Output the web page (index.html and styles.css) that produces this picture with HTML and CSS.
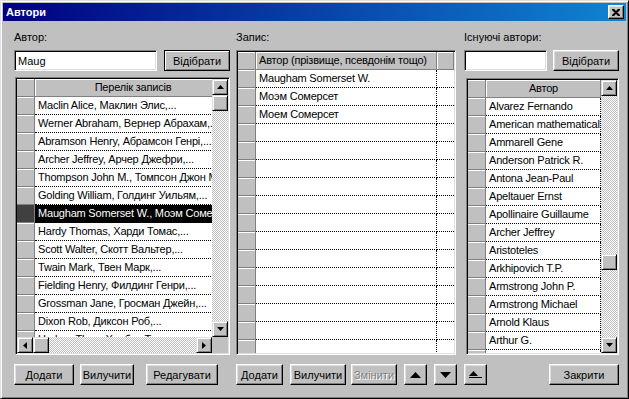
FILE: index.html
```html
<!DOCTYPE html>
<html lang="uk">
  <head>
    <meta charset="UTF-8" />
    <meta name="viewport" content="width=device-width, initial-scale=1.0" />
    <title>Автори</title>
    <link rel="stylesheet" href="styles.css">
  </head>
  <body>
    <div class="window">
      <div class="titlebar">
        <span class="title">Автори</span>
        <button class="close-btn" title="Закрити">
          <svg width="8" height="7" viewBox="0 0 8 7"><path d="M0 0h2l2 2 2-2h2v1L6 3l-1 .5L6 4l2 2v1H6L4 5 2 7H0V6l2-2 1-.5L2 3 0 1z" fill="#000"/></svg>
        </button>
      </div>

      <div class="content">
        <div class="panes">
          <!-- ліва панель: перелік записів -->
          <section class="pane pane-left">
            <div class="label">Автор:</div>
            <div class="filter">
              <input class="field field-left" type="text" value="Maug" />
              <button class="btn btn-default btn-filter">Відібрати</button>
            </div>
            <div class="grid grid-left">
              <div class="grid-view">
                <div class="row head"><div class="ind"></div><div class="cell col-list">Перелік записів</div></div>
                <div class="row"><div class="ind"></div><div class="cell col-list">Maclin Alice, Маклин Элис,...</div></div>
                <div class="row"><div class="ind"></div><div class="cell col-list">Werner Abraham, Вернер Абрахам,...</div></div>
                <div class="row"><div class="ind"></div><div class="cell col-list">Abramson Henry, Абрамсон Генрі,...</div></div>
                <div class="row"><div class="ind"></div><div class="cell col-list">Archer Jeffrey, Арчер Джефри,...</div></div>
                <div class="row"><div class="ind"></div><div class="cell col-list">Thompson John M., Томпсон Джон М.,...</div></div>
                <div class="row"><div class="ind"></div><div class="cell col-list">Golding William, Голдинг Уильям,...</div></div>
                <div class="row sel"><div class="ind"></div><div class="cell col-list">Maugham Somerset W., Моэм Сомерсет,...</div></div>
                <div class="row"><div class="ind"></div><div class="cell col-list">Hardy Thomas, Харди Томас,...</div></div>
                <div class="row"><div class="ind"></div><div class="cell col-list">Scott Walter, Скотт Вальтер,...</div></div>
                <div class="row"><div class="ind"></div><div class="cell col-list">Twain Mark, Твен Марк,...</div></div>
                <div class="row"><div class="ind"></div><div class="cell col-list">Fielding Henry, Филдинг Генри,...</div></div>
                <div class="row"><div class="ind"></div><div class="cell col-list">Grossman Jane, Гросман Джейн,...</div></div>
                <div class="row"><div class="ind"></div><div class="cell col-list">Dixon Rob, Диксон Роб,...</div></div>
                <div class="row"><div class="ind"></div><div class="cell col-list">Harbou Thea, Харбоу Tea,...</div></div>
              </div>
              <div class="vscroll">
                <div class="sb-btn"><svg width="7" height="4" viewBox="0 0 7 4"><path d="M3.5 0L7 4H0z"/></svg></div>
                <div class="track"><div class="thumb"></div></div>
                <div class="sb-btn"><svg width="7" height="4" viewBox="0 0 7 4"><path d="M0 0h7L3.5 4z"/></svg></div>
              </div>
              <div class="hscroll">
                <div class="sb-btn"><svg width="4" height="7" viewBox="0 0 4 7"><path d="M4 0v7L0 3.5z"/></svg></div>
                <div class="track"><div class="thumb"></div></div>
                <div class="sb-btn"><svg width="4" height="7" viewBox="0 0 4 7"><path d="M0 0l4 3.5L0 7z"/></svg></div>
              </div>
              <div class="corner"></div>
            </div>
          </section>

          <!-- середня панель: запис -->
          <section class="pane pane-mid">
            <div class="label">Запис:</div>
            <div class="grid grid-mid">
              <div class="grid-view">
                <div class="row head"><div class="ind"></div><div class="cell col-name">Автор (прізвище, псевдонім тощо)</div><div class="cell col-extra"></div></div>
                <div class="row"><div class="ind"></div><div class="cell col-name">Maugham Somerset W.</div><div class="cell col-extra"></div></div>
                <div class="row"><div class="ind"></div><div class="cell col-name">Моэм Сомерсет</div><div class="cell col-extra"></div></div>
                <div class="row"><div class="ind"></div><div class="cell col-name">Моем Сомерсет</div><div class="cell col-extra"></div></div>
                <div class="row"><div class="ind"></div><div class="cell col-name"></div><div class="cell col-extra"></div></div>
                <div class="row"><div class="ind"></div><div class="cell col-name"></div><div class="cell col-extra"></div></div>
                <div class="row"><div class="ind"></div><div class="cell col-name"></div><div class="cell col-extra"></div></div>
                <div class="row"><div class="ind"></div><div class="cell col-name"></div><div class="cell col-extra"></div></div>
                <div class="row"><div class="ind"></div><div class="cell col-name"></div><div class="cell col-extra"></div></div>
                <div class="row"><div class="ind"></div><div class="cell col-name"></div><div class="cell col-extra"></div></div>
                <div class="row"><div class="ind"></div><div class="cell col-name"></div><div class="cell col-extra"></div></div>
                <div class="row"><div class="ind"></div><div class="cell col-name"></div><div class="cell col-extra"></div></div>
                <div class="row"><div class="ind"></div><div class="cell col-name"></div><div class="cell col-extra"></div></div>
                <div class="row"><div class="ind"></div><div class="cell col-name"></div><div class="cell col-extra"></div></div>
                <div class="row"><div class="ind"></div><div class="cell col-name"></div><div class="cell col-extra"></div></div>
                <div class="row"><div class="ind"></div><div class="cell col-name"></div><div class="cell col-extra"></div></div>
                <div class="row"><div class="ind"></div><div class="cell col-name"></div><div class="cell col-extra"></div></div>
              </div>
            </div>
          </section>

          <!-- права панель: існуючі автори -->
          <section class="pane pane-right">
            <div class="label">Існуючі автори:</div>
            <div class="filter">
              <input class="field field-right" type="text" value="" />
              <button class="btn btn-filter">Відібрати</button>
            </div>
            <div class="grid grid-right">
              <div class="grid-view">
                <div class="row head"><div class="ind"></div><div class="cell col-author">Автор</div></div>
                <div class="row"><div class="ind"></div><div class="cell col-author">Alvarez Fernando</div></div>
                <div class="row"><div class="ind"></div><div class="cell col-author">American mathematical</div></div>
                <div class="row"><div class="ind"></div><div class="cell col-author">Ammarell Gene</div></div>
                <div class="row"><div class="ind"></div><div class="cell col-author">Anderson Patrick R.</div></div>
                <div class="row"><div class="ind"></div><div class="cell col-author">Antona Jean-Paul</div></div>
                <div class="row"><div class="ind"></div><div class="cell col-author">Apeltauer Ernst</div></div>
                <div class="row"><div class="ind"></div><div class="cell col-author">Apollinaire Guillaume</div></div>
                <div class="row"><div class="ind"></div><div class="cell col-author">Archer Jeffrey</div></div>
                <div class="row"><div class="ind"></div><div class="cell col-author">Aristoteles</div></div>
                <div class="row"><div class="ind"></div><div class="cell col-author">Arkhipovich T.P.</div></div>
                <div class="row"><div class="ind"></div><div class="cell col-author">Armstrong John P.</div></div>
                <div class="row"><div class="ind"></div><div class="cell col-author">Armstrong Michael</div></div>
                <div class="row"><div class="ind"></div><div class="cell col-author">Arnold Klaus</div></div>
                <div class="row"><div class="ind"></div><div class="cell col-author">Arthur G.</div></div>
                <div class="row"><div class="ind"></div><div class="cell col-author">Asimov Isaac</div></div>
              </div>
              <div class="vscroll">
                <div class="sb-btn"><svg width="7" height="4" viewBox="0 0 7 4"><path d="M3.5 0L7 4H0z"/></svg></div>
                <div class="track"><div class="thumb" style="margin-top: 158px"></div></div>
                <div class="sb-btn"><svg width="7" height="4" viewBox="0 0 7 4"><path d="M0 0h7L3.5 4z"/></svg></div>
              </div>
            </div>
          </section>
        </div>

        <div class="actions">
          <button class="btn act-add1">Додати</button>
          <button class="btn act-del1">Вилучити</button>
          <button class="btn act-edit">Редагувати</button>
          <button class="btn act-add2">Додати</button>
          <button class="btn act-del2">Вилучити</button>
          <button class="btn act-change" disabled>Змінити</button>
          <button class="btn act-arrow act-up"><svg width="11" height="6" viewBox="0 0 11 6"><path d="M5.5 0L11 6H0z"/></svg></button>
          <button class="btn act-arrow"><svg width="11" height="6" viewBox="0 0 11 6"><path d="M0 0h11L5.5 6z"/></svg></button>
          <button class="btn act-arrow"><svg width="13" height="8" viewBox="0 0 13 8"><path d="M4.5 0L9 5H0z"/><path d="M0 6.5h13" stroke="#000" stroke-width="1"/></svg></button>
          <button class="btn act-close">Закрити</button>
        </div>
      </div>
    </div>
  </body>
</html>
```

FILE: styles.css
```css
html {
  box-sizing: border-box;
  font-size: 11px;
}

*,
*:before,
*:after {
  box-sizing: inherit;
}

body {
  margin: 0;
  padding: 0;
  background: #c0c0c0;
  color: #000;
  font-family: "Liberation Sans", Arial, sans-serif;
  font-size: 11px;
}

button,
input {
  font: inherit;
  color: inherit;
  margin: 0;
}

/* ********** вікно ********** */
.window {
  width: 629px;
  height: 399px;
  padding: 2px;
  background: #c0c0c0;
  border: 1px solid;
  border-color: #dfdfdf #000 #000 #dfdfdf;
  box-shadow: inset 1px 1px #fff, inset -1px -1px #808080;
}

.titlebar {
  display: flex;
  align-items: center;
  height: 18px;
  padding: 0 2px 0 3px;
  background: linear-gradient(to right, #000080, #1084d0);
  color: #fff;
}

.title {
  flex: 1;
  font-size: 11px;
  font-weight: bold;
}

.close-btn {
  display: flex;
  align-items: center;
  justify-content: center;
  width: 16px;
  height: 14px;
  padding: 0;
  background: #c0c0c0;
  border: 1px solid;
  border-color: #fff #000 #000 #fff;
  box-shadow: inset -1px -1px #808080, inset 1px 1px #dfdfdf;
}

.content {
  padding: 8px 7px 0 11px;
}

.panes {
  display: flex;
  height: 326px;
}

.pane {
  display: flex;
  flex-direction: column;
}

.pane-left {
  width: 216px;
}

.pane-mid {
  width: 220px;
  margin-left: 6px;
}

.pane-right {
  width: 155px;
  margin-left: 8px;
}

.label {
  height: 16px;
  line-height: 16px;
  margin-bottom: 5px;
}

/* ********** поле та кнопки ********** */
.filter {
  display: flex;
  justify-content: space-between;
  height: 21px;
  margin-bottom: 6px;
}

.field {
  height: 21px;
  padding: 0 3px;
  background: #fff;
  border: 1px solid;
  border-color: #808080 #fff #fff #808080;
  box-shadow: inset 1px 1px #000, inset -1px -1px #dfdfdf;
  outline: none;
}

.field-left {
  width: 143px;
}

.field-right {
  width: 83px;
}

.btn {
  display: flex;
  align-items: center;
  justify-content: center;
  height: 21px;
  padding: 0;
  background: #c0c0c0;
  border: 1px solid;
  border-color: #fff #000 #000 #fff;
  box-shadow: inset -1px -1px #808080, inset 1px 1px #dfdfdf;
}

.btn-default {
  border-color: #000;
  box-shadow: inset 1px 1px #fff, inset -1px -1px #808080;
}

.btn-filter {
  width: 66px;
}

.btn:disabled {
  color: #808080;
  text-shadow: 1px 1px #fff;
}

/* ********** таблиці ********** */
.grid {
  flex: 1;
  min-height: 0;
  display: grid;
  padding: 1px;
  border: 1px solid;
  border-color: #808080 #fff #fff #808080;
  box-shadow: inset 1px 1px #000, inset -1px -1px #dfdfdf;
}

.grid-left {
  margin-left: 1px;
  grid-template-columns: 1fr 16px;
  grid-template-rows: 1fr 16px;
}

.grid-mid {
  grid-template-columns: 1fr;
}

.grid-right {
  margin-top: 1px;
  margin-left: 2px;
  grid-template-columns: 1fr 16px;
}

.grid-view {
  min-width: 0;
  min-height: 0;
  overflow: hidden;
  background: #fff;
}

.row {
  display: flex;
  height: 18px;
}

.ind {
  flex: none;
  width: 18px;
  background: #c0c0c0;
  border-right: 1px solid #808080;
  border-bottom: 1px solid #808080;
  box-shadow: inset 0 1px #fff;
}

.cell {
  flex: none;
  padding: 0 2px 0 3px;
  line-height: 17px;
  letter-spacing: -0.2px;
  white-space: nowrap;
  overflow: hidden;
  background: #fff;
  border-right: 1px dotted #000;
  border-bottom: 1px dotted #000;
}

.head .cell {
  text-align: center;
  background: #c0c0c0;
  border-right: 1px solid #808080;
  border-bottom: 1px solid #808080;
  box-shadow: inset 1px 1px #fff;
}

.row.sel .ind {
  background: #404040;
  box-shadow: none;
}

.row.sel .cell {
  background: #000;
  color: #fff;
}

.col-list {
  width: 196px;
}

.col-name {
  width: 181px;
}

.head .col-name {
  text-align: left;
}

.col-extra {
  width: 17px;
  border-right: none;
}

.col-author {
  width: 115px;
}

/* ********** смуги прокрутки ********** */
.vscroll,
.hscroll {
  display: flex;
  min-height: 0;
}

.vscroll {
  flex-direction: column;
}

.sb-btn,
.thumb {
  flex: none;
  display: flex;
  align-items: center;
  justify-content: center;
  width: 16px;
  height: 16px;
  background: #c0c0c0;
  border: 1px solid;
  border-color: #dfdfdf #000 #000 #dfdfdf;
  box-shadow: inset 1px 1px #fff, inset -1px -1px #808080;
}

.track {
  flex: 1;
  display: flex;
  flex-direction: column;
  background-color: #fff;
  background-image: repeating-conic-gradient(#c0c0c0 0% 25%, #fff 0% 50%);
  background-size: 2px 2px;
}

.hscroll .track {
  flex-direction: row;
}

.corner {
  background: #c0c0c0;
}

/* ********** нижній ряд кнопок ********** */
.actions {
  display: flex;
  margin-top: 9px;
}

.act-add1 { width: 60px; }
.act-del1 { width: 54px; margin-left: 6px; }
.act-edit { width: 72px; margin-left: 12px; }
.act-add2 { width: 47px; margin-left: 18px; }
.act-del2 { width: 56px; margin-left: 7px; }
.act-change { width: 46px; margin-left: 5px; }
.act-arrow { width: 23px; margin-left: 7px; }
.act-close { width: 70px; margin-left: auto; }
```
